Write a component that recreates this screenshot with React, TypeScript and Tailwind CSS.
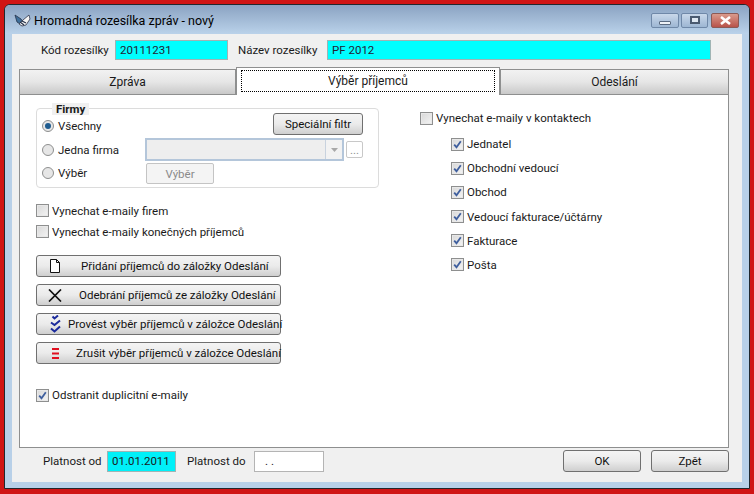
import type { ReactNode } from "react";

function Check({ checked, label }: { checked?: boolean; label: string }) {
  return (
    <div className="flex h-[14px] items-center gap-[3px] whitespace-nowrap">
      <span className="flex h-[13px] w-[13px] shrink-0 items-center justify-center border border-[#8e8f8f] bg-gradient-to-br from-[#d8d8d8] to-[#f4f4f4] shadow-[inset_0_0_0_1px_#e8e8e8]">
        {checked ? (
          <svg width="9" height="9" viewBox="0 0 9 9">
            <path d="M1.2 4.6 L3.5 7.2 L7.8 1.2" fill="none" stroke="#3f5f9e" strokeWidth="1.8" />
          </svg>
        ) : null}
      </span>
      <span>{label}</span>
    </div>
  );
}

function Radio({ checked, label }: { checked?: boolean; label: string }) {
  return (
    <div className="flex h-full w-[103px] shrink-0 items-center gap-[4px] whitespace-nowrap">
      <span className="flex h-[12px] w-[12px] items-center justify-center rounded-full border border-[#8e8f8f] bg-[#e6e6e6]">
        {checked ? <span className="h-[6px] w-[6px] rounded-full bg-[#1f5c8f]" /> : null}
      </span>
      <span>{label}</span>
    </div>
  );
}

function Btn({ children, className }: { children: ReactNode; className: string }) {
  return (
    <div className={`flex items-center justify-center rounded-[3px] border border-[#707070] bg-gradient-to-b from-[#f4f4f4] via-[#ebebeb] to-[#cfcfcf] text-[#111] ${className}`}>
      {children}
    </div>
  );
}

function ActionBtn({ icon, label, pad }: { icon: ReactNode; label: string; pad: string }) {
  return (
    <div className="flex h-[22px] w-[245px] items-center whitespace-nowrap rounded-[3px] border border-[#707070] bg-gradient-to-b from-[#f4f4f4] via-[#ebebeb] to-[#cfcfcf] text-[#111]">
      <span className="flex w-[30px] shrink-0 justify-center pl-[6px]">{icon}</span>
      <span className={pad}>{label}</span>
    </div>
  );
}

function Tab({ label, className }: { label: string; className: string }) {
  return (
    <div className={`flex items-center justify-center border border-b-0 border-[#8e8f8f] bg-gradient-to-b from-[#f2f2f2] via-[#e6e6e6] to-[#c9c9c9] ${className}`}>
      {label}
    </div>
  );
}

export default function App() {
  return (
    <div className="h-[494px] w-[754px] overflow-hidden bg-[#d01515] p-[4px] pb-[5px] font-['Roboto',sans-serif] text-[11.5px] leading-[14px] text-[#1a1a1a]">
      <div className="flex h-full flex-col rounded-t-[6px] border border-[#20282e] bg-[#b8d0e8]">
        {/* title bar */}
        <div className="flex h-[29px] shrink-0 items-center justify-between rounded-t-[5px] bg-gradient-to-b from-[#8ba3c2] to-[#bad2ea] pl-[9px] pr-[10px]">
          <div className="flex items-center gap-[3px] pt-[3px] text-[12.5px] text-black">
            <svg width="17" height="14" viewBox="0 0 17 14">
              <path d="M1 1 L7 5 L9 8 L6 10 L3 8 Z" fill="#3f6f9a" stroke="#26324a" strokeWidth="0.8" />
              <path d="M15 1 L16 5 L12 11 L8 12 L5 10 L9 6 Z" fill="#f4f4f4" stroke="#30364a" strokeWidth="0.8" />
              <path d="M6 8 L10 11 M8 7 L12 9" stroke="#26324a" strokeWidth="1.3" fill="none" />
            </svg>
            <span>Hromadná rozesílka zpráv - nový</span>
          </div>
          <div className="mt-[1px] flex gap-[2px]">
            <div className="flex h-[15px] w-[28px] items-end justify-center rounded-[2px] border border-[#6f88a8] bg-gradient-to-b from-[#c9d8ea] to-[#9db6d3] pb-[2px]">
              <span className="h-[4px] w-[12px] rounded-[1px] border border-[#5a6a80] bg-[#eef2f7]" />
            </div>
            <div className="flex h-[15px] w-[27px] items-center justify-center rounded-[2px] border border-[#6f88a8] bg-gradient-to-b from-[#c9d8ea] to-[#9db6d3]">
              <span className="h-[8px] w-[10px] border-2 border-[#4a5a70] bg-[#dfe8f2]" />
            </div>
            <div className="ml-[1px] flex h-[15px] w-[28px] items-center justify-center rounded-[2px] border border-[#8c5a55] bg-gradient-to-b from-[#d99a8c] to-[#b8524a]">
              <svg width="13" height="9" viewBox="0 0 13 9">
                <path d="M2 1 L11 8 M11 1 L2 8" stroke="#fff" strokeWidth="2.6" />
              </svg>
            </div>
          </div>
        </div>

        {/* client area */}
        <div className="mx-[7px] mb-[6px] flex min-h-0 flex-1 flex-col bg-[#f0f0f0] pl-[7px] pr-[13px]">
          <div className="flex h-[32px] shrink-0 items-center">
            <span className="ml-[22px] w-[74px]">Kód rozesílky</span>
            <div className="flex h-[20px] w-[113px] items-center border border-[#9fb4b4] bg-[#00ffff] pl-[4px] text-[#223]">20111231</div>
            <span className="ml-[10px] w-[89px]">Název rozesílky</span>
            <div className="flex h-[20px] w-[384px] items-center border border-[#9fb4b4] bg-[#00ffff] pl-[4px] text-[#223]">PF 2012</div>
          </div>

          <div className="flex h-[28px] shrink-0 items-end text-[12px]">
            <Tab label="Zpráva" className="h-[25px] w-[217px]" />
            <div className="z-10 -mb-px flex h-[28px] w-[264px] items-center justify-center border border-b-0 border-[#8e8f8f] bg-white px-[4px] pt-[2px] pb-[3px]">
              <span className="flex h-full w-full items-center justify-center border border-dotted border-black">Výběr příjemců</span>
            </div>
            <Tab label="Odeslání" className="h-[25px] w-[229px]" />
          </div>

          {/* tab page */}
          <div className="flex h-[354px] w-[710px] shrink-0 border border-[#8e8f8f] bg-white pl-[16px] pt-[13px]">
            <div className="flex w-[384px] shrink-0 flex-col">
              <div className="relative flex h-[80px] w-[343px] shrink-0 flex-col rounded-[4px] border border-[#dcdcdc] pl-[5px] pr-[15px] pt-[4px]">
                <span className="absolute left-[15px] top-[-6px] bg-[#f0f0f0] px-[4px] leading-[12px] font-bold">Firmy</span>
                <div className="flex h-[25px] items-start">
                  <Radio checked label="Všechny" />
                  <Btn className="ml-auto h-[22px] w-[90px]">Speciální filtr</Btn>
                </div>
                <div className="flex h-[23px] items-center">
                  <Radio label="Jedna firma" />
                  <div className="flex h-[23px] w-[200px] items-center justify-end border-2 border-[#b4c6da] bg-[#eeeeee]">
                    <span className="flex h-full w-[17px] items-center justify-center border-l border-[#c8d2de] bg-[#f2f2f2]">
                      <svg width="7" height="4" viewBox="0 0 7 4"><path d="M0 0 H7 L3.5 4 Z" fill="#a8a8a8" /></svg>
                    </span>
                  </div>
                  <div className="ml-[2px] flex h-[17px] w-[17px] items-center justify-center rounded-[2px] border border-[#c8c8c8] text-[#909090]">...</div>
                </div>
                <div className="flex h-[23px] items-center">
                  <Radio label="Výběr" />
                  <div className="ml-[1px] flex h-[21px] w-[68px] items-center justify-center self-end rounded-[2px] border border-[#c4c4c4] bg-[#f4f4f4] text-[#8a8a8a]">Výběr</div>
                </div>
              </div>

              <div className="mt-[12px] flex h-[21px] items-center"><Check label="Vynechat e-maily firem" /></div>
              <div className="flex h-[21px] items-center"><Check label="Vynechat e-maily konečných příjemců" /></div>

              <div className="mt-[13px] flex flex-col gap-[7px]">
                <ActionBtn
                  pad="pl-[14px]"
                  label="Přidání příjemců do záložky Odeslání"
                  icon={
                    <svg width="12" height="14" viewBox="0 0 12 14">
                      <path d="M1.5 0.5 H7.5 L10.5 3.5 V13.5 H1.5 Z M7.5 0.5 V3.5 H10.5" fill="#fff" stroke="#111" strokeWidth="1" />
                    </svg>
                  }
                />
                <ActionBtn
                  pad="pl-[12px]"
                  label="Odebrání příjemců ze záložky Odeslání"
                  icon={
                    <svg width="14" height="13" viewBox="0 0 14 13">
                      <path d="M1 0.5 L13 12.5 M13 0.5 L1 12.5" stroke="#111" strokeWidth="1.7" />
                    </svg>
                  }
                />
                <ActionBtn
                  pad="pl-[1px]"
                  label="Provést výběr příjemců v záložce Odeslání"
                  icon={
                    <svg width="11" height="18" viewBox="0 0 11 18">
                      <path d="M2.5 1.5 L4.5 3.5 L8 0.5 M1 7.5 L4.5 10 L10 5.5 M1 13.5 L4.5 16.5 L10 11.5" fill="none" stroke="#1b2a9c" strokeWidth="2" />
                    </svg>
                  }
                />
                <ActionBtn
                  pad="pl-[9px]"
                  label="Zrušit výběr příjemců v záložce Odeslání"
                  icon={
                    <svg width="9" height="11" viewBox="0 0 9 11">
                      <path d="M1 1 H8 M1 5.5 H8 M1 10 H8" stroke="#e01020" strokeWidth="2" />
                    </svg>
                  }
                />
              </div>

              <div className="mt-[24px]"><Check checked label="Odstranit duplicitní e-maily" /></div>
            </div>

            <div className="flex flex-col pt-[3px]">
              <Check label="Vynechat e-maily v kontaktech" />
              <div className="ml-[31px] mt-[12px] flex flex-col gap-[10.2px]">
                <Check checked label="Jednatel" />
                <Check checked label="Obchodní vedoucí" />
                <Check checked label="Obchod" />
                <Check checked label="Vedoucí fakturace/účtárny" />
                <Check checked label="Fakturace" />
                <Check checked label="Pošta" />
              </div>
            </div>
          </div>

          <div className="flex flex-1 items-center pb-[8px]">
            <span className="ml-[24px] w-[64px]">Platnost od</span>
            <div className="flex h-[21px] w-[69px] items-center border border-[#9fb4b4] bg-[#00f0f8] pl-[4px]">01.01.2011</div>
            <span className="ml-[11px] w-[67px]">Platnost do</span>
            <div className="flex h-[21px] w-[70px] items-center border border-[#b4b4b4] bg-white pl-[10px]">. .</div>
            <Btn className="ml-auto h-[22px] w-[78px]">OK</Btn>
            <Btn className="ml-[10px] h-[22px] w-[78px]">Zpět</Btn>
          </div>
        </div>
      </div>
    </div>
  );
}
